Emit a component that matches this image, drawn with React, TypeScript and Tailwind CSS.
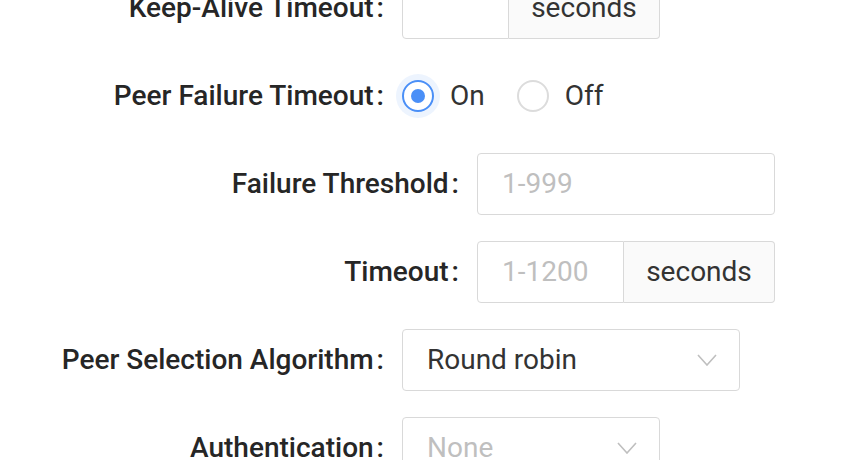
import React from "react";

function Label({ text, width }: { text: string; width: string }) {
  return (
    <div className={`${width} shrink-0 flex justify-end items-center pr-[18px] font-medium text-[#262626]`}>
      <span>{text}</span>
      <span className="ml-[3px]">:</span>
    </div>
  );
}

function Chevron() {
  return (
    <svg width="20" height="12" viewBox="0 0 20 12" fill="none">
      <path d="M1 1L10 11L19 1" stroke="#bfbfbf" strokeWidth="1.6" strokeLinejoin="miter" />
    </svg>
  );
}

export default function App() {
  return (
    <div
      className="w-[846px] h-[460px] overflow-hidden bg-white text-[28px] leading-none"
      style={{ fontFamily: "Roboto, 'Noto Sans', sans-serif" }}
    >
      <div className="mt-[-23px]">
        {/* Keep-Alive Timeout */}
        <div className="flex items-center h-[62px] mb-[26px]">
          <Label text="Keep-Alive Timeout" width="w-[402px]" />
          <div className="flex h-[62px]">
            <div className="w-[107px] h-full border border-[#d9d9d9] rounded-l-[4px] bg-white" />
            <div className="w-[151px] h-full border border-l-0 border-[#d9d9d9] rounded-r-[4px] bg-[#fafafa] flex items-center justify-center text-[#333]">
              seconds
            </div>
          </div>
        </div>

        {/* Peer Failure Timeout */}
        <div className="flex items-center h-[62px] mb-[26px]">
          <Label text="Peer Failure Timeout" width="w-[402px]" />
          <div className="flex items-center text-[#333]">
            <div className="w-[32px] h-[32px] rounded-full border-2 border-[#4a8ff7] flex items-center justify-center shadow-[0_0_0_6px_#edf4fe]">
              <div className="w-[14px] h-[14px] rounded-full bg-[#4a8ff7]" />
            </div>
            <span className="ml-[16px]">On</span>
            <div className="ml-[32px] w-[32px] h-[32px] rounded-full border-2 border-[#dcdcdc] bg-white" />
            <span className="ml-[16px]">Off</span>
          </div>
        </div>

        {/* Failure Threshold */}
        <div className="flex items-center h-[62px] mb-[26px]">
          <Label text="Failure Threshold" width="w-[477px]" />
          <div className="w-[298px] h-[62px] border border-[#d9d9d9] rounded-[4px] flex items-center px-[24px] text-[#bfbfbf]">
            1-999
          </div>
        </div>

        {/* Timeout */}
        <div className="flex items-center h-[62px] mb-[26px]">
          <Label text="Timeout" width="w-[477px]" />
          <div className="flex h-[62px]">
            <div className="w-[147px] h-full border border-[#d9d9d9] rounded-l-[4px] flex items-center px-[24px] text-[#bfbfbf]">
              1-1200
            </div>
            <div className="w-[151px] h-full border border-l-0 border-[#d9d9d9] rounded-r-[4px] bg-[#fafafa] flex items-center justify-center text-[#333]">
              seconds
            </div>
          </div>
        </div>

        {/* Peer Selection Algorithm */}
        <div className="flex items-center h-[62px] mb-[26px]">
          <Label text="Peer Selection Algorithm" width="w-[402px]" />
          <div className="w-[338px] h-[62px] border border-[#d9d9d9] rounded-[4px] flex items-center justify-between pl-[24px] pr-[22px] text-[#333]">
            <span>Round robin</span>
            <Chevron />
          </div>
        </div>

        {/* Authentication */}
        <div className="flex items-center h-[62px] mb-[26px]">
          <Label text="Authentication" width="w-[402px]" />
          <div className="w-[258px] h-[62px] border border-[#d9d9d9] rounded-[4px] flex items-center justify-between pl-[24px] pr-[22px] text-[#bfbfbf]">
            <span>None</span>
            <Chevron />
          </div>
        </div>
      </div>
    </div>
  );
}
